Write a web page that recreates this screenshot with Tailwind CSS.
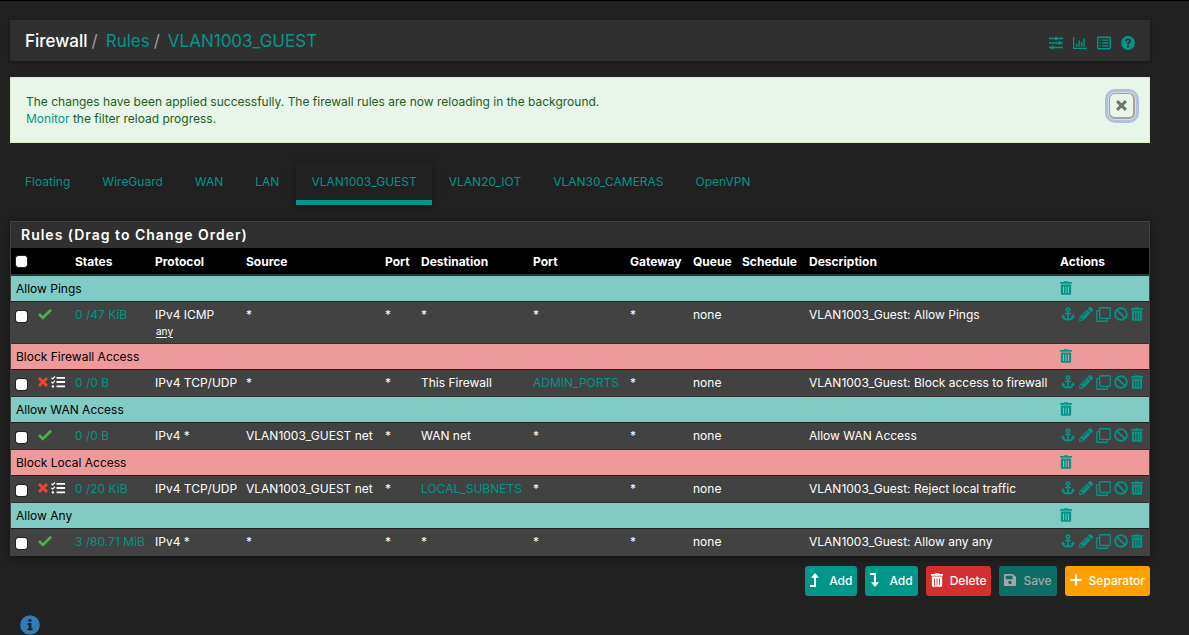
<!DOCTYPE html>
<html lang="en">
<head>
<meta charset="utf-8">
<meta name="viewport" content="width=device-width, initial-scale=1">
<title>Firewall: Rules: VLAN1003_GUEST</title>
<script src="https://cdn.jsdelivr.net/npm/@tailwindcss/browser@4"></script>
</head>
<body class="min-h-screen border-t border-black bg-[#212121] font-['Inter',sans-serif] text-[12px] leading-[17px] text-white">
<svg class="hidden" aria-hidden="true">
  <symbol id="trash" viewBox="0 0 448 512"><path fill="currentColor" d="M32 464a48 48 0 0 0 48 48h288a48 48 0 0 0 48-48V128H32zm272-256a16 16 0 0 1 32 0v224a16 16 0 0 1-32 0zm-96 0a16 16 0 0 1 32 0v224a16 16 0 0 1-32 0zm-96 0a16 16 0 0 1 32 0v224a16 16 0 0 1-32 0zM432 32H312l-9.4-18.700A24 24 0 0 0 281.100 0H166.800a23.720 23.720 0 0 0-21.400 13.300L136 32H16A16 16 0 0 0 0 48v32a16 16 0 0 0 16 16h416a16 16 0 0 0 16-16V48a16 16 0 0 0-16-16z"/></symbol>
  <symbol id="pencil" viewBox="0 0 512 512"><path fill="currentColor" d="M497.9 142.1l-46.1 46.1c-4.7 4.7-12.3 4.7-17 0l-111-111c-4.7-4.7-4.7-12.3 0-17l46.1-46.1c18.7-18.7 49.1-18.7 67.9 0l60.1 60.1c18.8 18.7 18.8 49.1 0 67.9zM284.2 99.800L21.600 362.400.4 483.900c-2.9 16.4 11.4 30.600 27.800 27.800l121.500-21.300 262.600-262.600c4.700-4.700 4.700-12.300 0-17l-111-111c-4.800-4.700-12.400-4.700-17.100 0zM124.100 339.900c-5.500-5.500-5.500-14.300 0-19.800l154-154c5.500-5.500 14.300-5.500 19.800 0s5.500 14.300 0 19.800l-154 154c-5.500 5.500-14.300 5.500-19.800 0zM88 424h48v36.300l-64.500 11.300-31.100-31.100L51.700 376H88v48z"/></symbol>
  <symbol id="anchor" viewBox="0 0 16 16"><g fill="none" stroke="currentColor" stroke-width="1.9"><circle cx="8" cy="3" r="1.900"/><path d="M8 5v9.500M4.500 7.400h7M1.900 10.500c.4 2.600 2.800 4 6.100 4s5.700-1.400 6.100-4"/></g><path fill="currentColor" d="M2 8l2.900 3.600H0zM14 8l2 3.600h-4.900z"/></symbol>
  <symbol id="clone" viewBox="0 0 14 14"><path fill="none" stroke="currentColor" stroke-width="1.2" d="M4.200.7h8.300a.8.8 0 0 1 .8.8v8.300a.8.8 0 0 1-.8.8H4.200a.8.8 0 0 1-.8-.8V1.500a.8.8 0 0 1 .8-.8zM3.200 3.400H1.500a.8.8 0 0 0-.8.8v8.300a.8.8 0 0 0 .8.8h8.300a.8.8 0 0 0 .8-.8v-1.700"/></symbol>
  <symbol id="ban" viewBox="0 0 14 14"><g fill="none" stroke="currentColor" stroke-width="1.700"><circle cx="7" cy="7" r="5.900"/><path d="M2.900 2.900l8.200 8.200"/></g></symbol>
  <symbol id="check" viewBox="0 0 14 12"><path fill="none" stroke="currentColor" stroke-width="2.700" d="M1 6l3.900 3.900L13 1.700"/></symbol>
  <symbol id="cross" viewBox="0 0 10 10"><path fill="none" stroke="currentColor" stroke-width="2.700" d="M1 1l8 8M9 1L1 9"/></symbol>
  <symbol id="tasks" viewBox="0 0 14 12"><path fill="none" stroke="currentColor" stroke-width="1.800" d="M5.500 1.900H14M5.500 6H14M5.500 10.300H14"/><path fill="none" stroke="currentColor" stroke-width="1.100" d="M.4 1.700l1.200 1.200L4 .5M.4 5.900l1.200 1.200L4 4.700"/><circle cx="1.900" cy="10.400" r="1.200" fill="currentColor"/></symbol>
</svg>

<main class="mr-[39px] ml-[10px] pt-[19px]">
  <header class="flex h-[41px] items-center justify-between bg-[#303030] px-[15px] shadow-[0_1px_3px_rgba(0,0,0,0.4)]">
    <nav aria-label="Breadcrumb">
      <ol class="flex gap-1 text-[17px] leading-6 text-[#009688]">
        <li class="flex gap-1 font-medium text-white">Firewall <span class="font-normal text-[#9e9e9e]">/</span></li>
        <li class="flex gap-1 pl-1"><a href="#">Rules</a> <span class="text-[#9e9e9e]">/</span></li>
        <li class="pl-1"><a href="#">VLAN1003_GUEST</a></li>
      </ol>
    </nav>
    <div class="flex gap-[10px] pt-[5px] text-[#009688]">
      <a href="#" aria-label="Advanced filter"><svg class="size-[14px]" viewBox="0 0 14 14"><path fill="none" stroke="currentColor" stroke-width="1.500" d="M0 2.500h14M0 7h14M0 11.500h14"/><path fill="currentColor" d="M6 .7h2.200v3.600H6zM9.500 5.200h2.200v3.600H9.500zM2.400 9.700h2.200v3.600H2.400z"/></svg></a>
      <a href="#" aria-label="Status graph"><svg class="size-[14px]" viewBox="0 0 14 14"><path fill="none" stroke="currentColor" stroke-width="1.200" d="M.6 1v11.400H14"/><path fill="none" stroke="currentColor" stroke-width="1.400" d="M3.600 10.800V7.700M6.100 10.800V4.400M8.600 10.800V5.900M11.100 10.800V2.200"/></svg></a>
      <a href="#" aria-label="Firewall log"><svg class="size-[14px]" viewBox="0 0 14 14"><rect x=".7" y="1.200" width="12.600" height="11.600" rx="1" fill="none" stroke="currentColor" stroke-width="1.400"/><path fill="none" stroke="currentColor" stroke-width="1.300" d="M2.600 4.200h1.300M5 4.200h6.500M2.600 7h1.300M5 7h6.500M2.600 9.800h1.300M5 9.800h6.500"/></svg></a>
      <a href="#" aria-label="Help"><svg class="size-[14px]" viewBox="0 0 14 14"><circle cx="7" cy="7" r="6.900" fill="currentColor"/><path fill="none" stroke="#303030" stroke-width="1.900" d="M4.700 5.300c.2-1.300 1.100-1.900 2.300-1.900 1.300 0 2.200.7 2.200 1.700C9.200 6.500 7 6.500 7 8.500"/><path fill="#303030" d="M6 9.500h2v1.900H6z"/></svg></a>
    </div>
  </header>

  <div role="alert" class="mt-4 flex h-[66px] items-start justify-between border border-[#dcedc8] bg-[#e8f5e9] py-[15px] pl-[15px] text-[#1b5e20]">
    <p>The changes have been applied successfully. The firewall rules are now reloading in the background.<br><a href="#" class="text-[#009688]">Monitor</a> the filter reload progress.</p>
    <button type="button" aria-label="Close" class="mr-[14px] grid size-[26px] place-items-center rounded-[6px] border-2 border-t border-l border-[#a89e94] bg-[#e8f5e9] text-[#6f756f] shadow-[0_0_0_1px_#d4deea,0_0_0_4px_#afc1df]"><svg class="size-[11px]"><use href="#cross"/></svg></button>
  </div>

  <nav aria-label="Interfaces" class="mt-5 flex h-[42px] gap-[2px] text-[#009688]">
    <a href="#" class="px-[15px] pt-[10px]">Floating</a>
    <a href="#" class="px-[15px] pt-[10px]">WireGuard</a>
    <a href="#" class="px-[15px] pt-[10px]">WAN</a>
    <a href="#" class="px-[15px] pt-[10px]">LAN</a>
    <a href="#" aria-current="page" class="border-b-[5px] border-[#009688] px-[15px] pt-[10px] shadow-[0_2px_8px_rgba(0,0,0,0.45)]">VLAN1003_GUEST</a>
    <a href="#" class="px-[15px] pt-[10px]">VLAN20_IOT</a>
    <a href="#" class="px-[15px] pt-[10px]">VLAN30_CAMERAS</a>
    <a href="#" class="px-[15px] pt-[10px]">OpenVPN</a>
  </nav>

  <section class="mt-4 border border-b-0 border-[#424242] bg-[#303030] shadow-[0_2px_8px_rgba(0,0,0,0.45)]">
    <h2 class="h-[26px] px-[10px] text-[14px] leading-[26px] font-semibold tracking-[1px]">Rules (Drag to Change Order)</h2>
    <table class="w-full table-fixed border-collapse text-left whitespace-nowrap [&_input]:block [&_input]:size-[11px] [&_input]:appearance-none [&_input]:rounded-[2px] [&_input]:bg-white [&_input]:outline [&_input]:outline-[#222] [&_td]:px-[5px] [&_td]:pt-1 [&_td]:align-top [&_th]:px-[5px] [&_th]:font-bold">
      <colgroup>
        <col class="w-[21px]"><col class="w-[38px]"><col class="w-[80px]"><col class="w-[91px]"><col class="w-[139px]"><col class="w-[36px]"><col class="w-[112px]"><col class="w-[97px]"><col class="w-[63px]"><col class="w-[49px]"><col class="w-[67px]"><col><col class="w-[94px]">
      </colgroup>
      <thead>
        <tr class="h-[27px] border-b-2 border-[#303030] bg-black">
          <th><input type="checkbox" aria-label="Select all rules"></th><th></th><th>States</th><th>Protocol</th><th>Source</th><th>Port</th><th>Destination</th><th>Port</th><th>Gateway</th><th>Queue</th><th>Schedule</th><th>Description</th><th>Actions</th>
        </tr>
      </thead>
      <tbody class="[&_a]:text-[#009688]">
        <tr class="h-[26px] border-b border-[#212121] bg-[#80cbc4] text-black">
          <td colspan="12">Allow Pings</td>
          <td><a href="#" aria-label="Delete separator" class="block pt-px"><svg class="h-[14px] w-3"><use href="#trash"/></svg></a></td>
        </tr>
        <tr class="h-[42px] border-b border-[#303030] bg-[#424242]">
          <td><input type="checkbox" aria-label="Select Allow Pings" class="mt-[5px]"></td>
          <td><svg class="ml-px mt-[2px] h-3 w-[14px] text-[#4caf50]"><use href="#check"/></svg></td>
          <td><a href="#">0 /47 KiB</a></td>
          <td>IPv4 ICMP<div class="pl-px text-[10px] underline underline-offset-2">any</div></td>
          <td>*</td><td>*</td><td>*</td><td>*</td><td>*</td><td>none</td><td></td><td>VLAN1003_Guest: Allow Pings</td>
          <td><div class="flex gap-[3px] pt-px"><a href="#" aria-label="Anchor"><svg class="h-[14px] w-4"><use href="#anchor"/></svg></a><a href="#" aria-label="Edit"><svg class="size-[14px]"><use href="#pencil"/></svg></a><a href="#" aria-label="Copy"><svg class="size-[15px]"><use href="#clone"/></svg></a><a href="#" aria-label="Disable"><svg class="size-[14px]"><use href="#ban"/></svg></a><a href="#" aria-label="Delete"><svg class="h-[14px] w-3"><use href="#trash"/></svg></a></div></td>
        </tr>
        <tr class="h-[26px] border-b border-[#212121] bg-[#ef9a9a] text-black">
          <td colspan="12">Block Firewall Access</td>
          <td><a href="#" aria-label="Delete separator" class="block pt-px"><svg class="h-[14px] w-3"><use href="#trash"/></svg></a></td>
        </tr>
        <tr class="h-[27px] border-b border-[#303030] bg-[#424242]">
          <td><input type="checkbox" aria-label="Select Block access to firewall" class="mt-[5px]"></td>
          <td><div class="mt-[2px] flex items-center gap-[3px]"><svg class="ml-px size-[10px] shrink-0 text-[#f44336]"><use href="#cross"/></svg><svg class="h-3 w-[14px] shrink-0"><use href="#tasks"/></svg></div></td>
          <td><a href="#">0 /0 B</a></td>
          <td>IPv4 TCP/UDP</td><td>*</td><td>*</td><td>This Firewall</td><td><a href="#">ADMIN_PORTS</a></td><td>*</td><td>none</td><td></td><td>VLAN1003_Guest: Block access to firewall</td>
          <td><div class="flex gap-[3px] pt-px"><a href="#" aria-label="Anchor"><svg class="h-[14px] w-4"><use href="#anchor"/></svg></a><a href="#" aria-label="Edit"><svg class="size-[14px]"><use href="#pencil"/></svg></a><a href="#" aria-label="Copy"><svg class="size-[15px]"><use href="#clone"/></svg></a><a href="#" aria-label="Disable"><svg class="size-[14px]"><use href="#ban"/></svg></a><a href="#" aria-label="Delete"><svg class="h-[14px] w-3"><use href="#trash"/></svg></a></div></td>
        </tr>
        <tr class="h-[26px] border-b border-[#212121] bg-[#80cbc4] text-black">
          <td colspan="12">Allow WAN Access</td>
          <td><a href="#" aria-label="Delete separator" class="block pt-px"><svg class="h-[14px] w-3"><use href="#trash"/></svg></a></td>
        </tr>
        <tr class="h-[27px] border-b border-[#303030] bg-[#424242]">
          <td><input type="checkbox" aria-label="Select Allow WAN Access" class="mt-[5px]"></td>
          <td><svg class="ml-px mt-[2px] h-3 w-[14px] text-[#4caf50]"><use href="#check"/></svg></td>
          <td><a href="#">0 /0 B</a></td>
          <td>IPv4 *</td><td>VLAN1003_GUEST net</td><td>*</td><td>WAN net</td><td>*</td><td>*</td><td>none</td><td></td><td>Allow WAN Access</td>
          <td><div class="flex gap-[3px] pt-px"><a href="#" aria-label="Anchor"><svg class="h-[14px] w-4"><use href="#anchor"/></svg></a><a href="#" aria-label="Edit"><svg class="size-[14px]"><use href="#pencil"/></svg></a><a href="#" aria-label="Copy"><svg class="size-[15px]"><use href="#clone"/></svg></a><a href="#" aria-label="Disable"><svg class="size-[14px]"><use href="#ban"/></svg></a><a href="#" aria-label="Delete"><svg class="h-[14px] w-3"><use href="#trash"/></svg></a></div></td>
        </tr>
        <tr class="h-[26px] border-b border-[#212121] bg-[#ef9a9a] text-black">
          <td colspan="12">Block Local Access</td>
          <td><a href="#" aria-label="Delete separator" class="block pt-px"><svg class="h-[14px] w-3"><use href="#trash"/></svg></a></td>
        </tr>
        <tr class="h-[27px] border-b border-[#303030] bg-[#424242]">
          <td><input type="checkbox" aria-label="Select Reject local traffic" class="mt-[5px]"></td>
          <td><div class="mt-[2px] flex items-center gap-[3px]"><svg class="ml-px size-[10px] shrink-0 text-[#f44336]"><use href="#cross"/></svg><svg class="h-3 w-[14px] shrink-0"><use href="#tasks"/></svg></div></td>
          <td><a href="#">0 /20 KiB</a></td>
          <td>IPv4 TCP/UDP</td><td>VLAN1003_GUEST net</td><td>*</td><td><a href="#">LOCAL_SUBNETS</a></td><td>*</td><td>*</td><td>none</td><td></td><td>VLAN1003_Guest: Reject local traffic</td>
          <td><div class="flex gap-[3px] pt-px"><a href="#" aria-label="Anchor"><svg class="h-[14px] w-4"><use href="#anchor"/></svg></a><a href="#" aria-label="Edit"><svg class="size-[14px]"><use href="#pencil"/></svg></a><a href="#" aria-label="Copy"><svg class="size-[15px]"><use href="#clone"/></svg></a><a href="#" aria-label="Disable"><svg class="size-[14px]"><use href="#ban"/></svg></a><a href="#" aria-label="Delete"><svg class="h-[14px] w-3"><use href="#trash"/></svg></a></div></td>
        </tr>
        <tr class="h-[26px] border-b border-[#212121] bg-[#80cbc4] text-black">
          <td colspan="12">Allow Any</td>
          <td><a href="#" aria-label="Delete separator" class="block pt-px"><svg class="h-[14px] w-3"><use href="#trash"/></svg></a></td>
        </tr>
        <tr class="h-7 bg-[#424242]">
          <td><input type="checkbox" aria-label="Select Allow any any" class="mt-[5px]"></td>
          <td><svg class="ml-px mt-[2px] h-3 w-[14px] text-[#4caf50]"><use href="#check"/></svg></td>
          <td><a href="#">3 /80.71 MiB</a></td>
          <td>IPv4 *</td><td>*</td><td>*</td><td>*</td><td>*</td><td>*</td><td>none</td><td></td><td>VLAN1003_Guest: Allow any any</td>
          <td><div class="flex gap-[3px] pt-px"><a href="#" aria-label="Anchor"><svg class="h-[14px] w-4"><use href="#anchor"/></svg></a><a href="#" aria-label="Edit"><svg class="size-[14px]"><use href="#pencil"/></svg></a><a href="#" aria-label="Copy"><svg class="size-[15px]"><use href="#clone"/></svg></a><a href="#" aria-label="Disable"><svg class="size-[14px]"><use href="#ban"/></svg></a><a href="#" aria-label="Delete"><svg class="h-[14px] w-3"><use href="#trash"/></svg></a></div></td>
        </tr>
      </tbody>
    </table>
  </section>

  <div class="mt-[10px] flex justify-end gap-2 [&_button]:flex [&_button]:h-[30px] [&_button]:items-center [&_button]:rounded-[3px] [&_button]:px-[5px] [&_button]:pb-[2px] [&_button]:font-medium">
    <button type="button" class="gap-[10px] bg-[#009688]"><svg class="h-[14px] w-[9px]" viewBox="0 0 9 14"><path fill="none" stroke="currentColor" stroke-width="2" d="M0 13h5V3"/><path fill="currentColor" d="M5 0l4 4.800H1z"/></svg>Add</button>
    <button type="button" class="gap-[10px] bg-[#009688]"><svg class="h-[14px] w-[9px]" viewBox="0 0 9 14"><path fill="none" stroke="currentColor" stroke-width="2" d="M0 1h5v10"/><path fill="currentColor" d="M5 14l4-4.800H1z"/></svg>Add</button>
    <button type="button" class="gap-[7px] bg-[#d32f2f]"><svg class="h-[14px] w-3"><use href="#trash"/></svg>Delete</button>
    <button type="button" disabled class="gap-[7px] bg-[#0d6c63] text-[#a6a6a6]"><svg class="h-[14px] w-3" viewBox="0 0 448 512"><path fill="currentColor" d="M433.941 129.941l-83.882-83.882A48 48 0 0 0 316.118 32H48C21.490 32 0 53.490 0 80v352c0 26.510 21.490 48 48 48h352c26.510 0 48-21.490 48-48V163.882a48 48 0 0 0-14.059-33.941zM224 416c-35.346 0-64-28.654-64-64 0-35.346 28.654-64 64-64s64 28.654 64 64c0 35.346-28.654 64-64 64zm96-304.520V212c0 6.627-5.373 12-12 12H76c-6.627 0-12-5.373-12-12V108c0-6.627 5.373-12 12-12h228.520c3.183 0 6.235 1.264 8.485 3.515l3.480 3.480A11.996 11.996 0 0 1 320 111.480z"/></svg>Save</button>
    <button type="button" class="gap-[7px] bg-[#ffa000]"><svg class="size-3" viewBox="0 0 12 12"><path fill="none" stroke="currentColor" stroke-width="2.200" stroke-linecap="round" d="M6 1v10M1 6h10"/></svg>Separator</button>
  </div>

  <button type="button" aria-label="Information" class="mt-[19px] ml-[10px] block"><svg class="size-5" viewBox="0 0 20 20"><circle cx="10" cy="10" r="9.800" fill="#337ab7"/><path fill="#212121" d="M8.400 4.300h3v2.500h-3zM7.600 8.100h3.800v5.300h1.100v1.900H7.500v-1.900h1.200V9.900H7.600z"/></svg></button>
</main>
</body>
</html>
